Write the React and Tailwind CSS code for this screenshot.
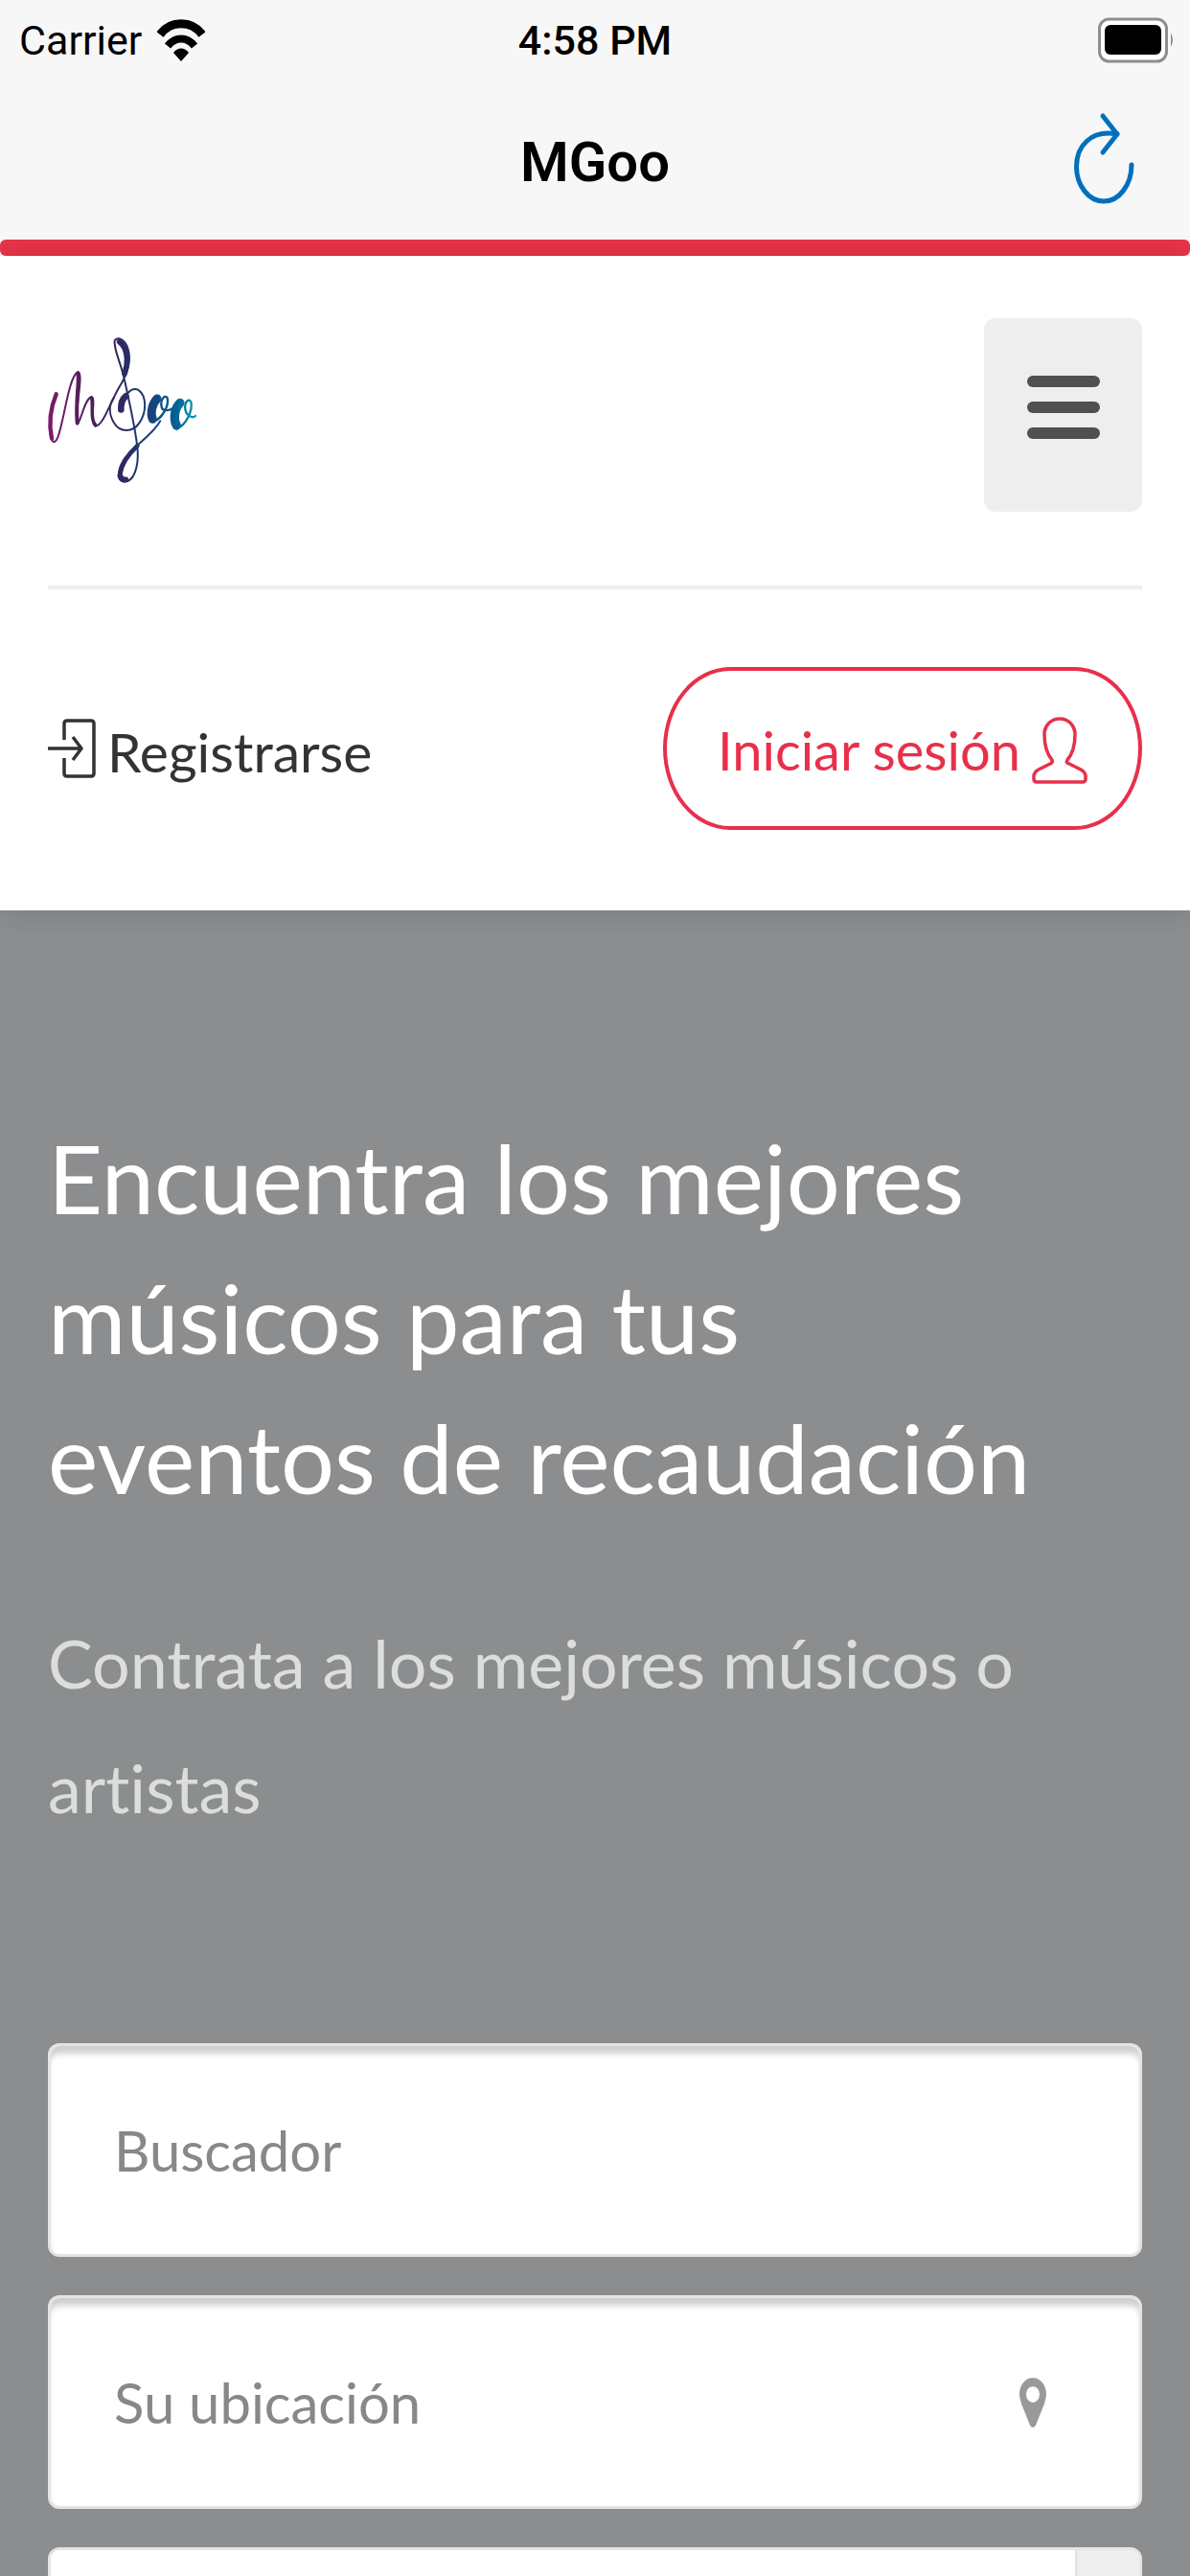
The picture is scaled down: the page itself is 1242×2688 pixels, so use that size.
import React from 'react';

function WifiIcon() {
  return (
    <svg width="50" height="46" viewBox="0 0 50 46" fill="none" stroke="#000" aria-hidden="true">
      <path d="M3 17 C14 2 36 2 47 17" strokeWidth="9" />
      <path d="M11 29 C19 19 31 19 39 29" strokeWidth="8" />
      <path d="M25 45 L17 36 C21 30 29 30 33 36 Z" fill="#000" stroke="none" />
    </svg>
  );
}

function BatteryIcon() {
  return (
    <svg width="80" height="48" viewBox="0 0 80 48" aria-hidden="true">
      <rect x="1.5" y="2" width="70" height="44" rx="10" fill="#fff" stroke="#8e8e8e" strokeWidth="3" />
      <rect x="7" y="8" width="59" height="31" rx="6" fill="#000" />
      <path d="M76 16 Q80 24 76 31 Z" fill="#8e8e8e" />
    </svg>
  );
}

function ReloadIcon() {
  return (
    <svg width="70" height="98" viewBox="0 0 70 98" fill="none" stroke="#0070bd" strokeWidth="5" strokeLinecap="round" strokeLinejoin="round" aria-hidden="true">
      <path d="M63 56 C63 77 50 94 34 94 C18 94 5.500 77 5.500 58 C5.500 37 20 19 48 24" />
      <path d="M33 5 L48 24 L33 43" />
    </svg>
  );
}

function Logo() {
  return (
    <svg width="160" height="157" viewBox="60 60 480 471" fill="none" strokeLinecap="round" strokeLinejoin="round" className="overflow-visible" role="img" aria-label="MGoo">
      <defs>
        <linearGradient id="ink" gradientUnits="userSpaceOnUse" x1="60" y1="0" x2="520" y2="0">
          <stop offset="0" stopColor="#7c1a6c" />
          <stop offset="0.25" stopColor="#4d2058" />
          <stop offset="0.5" stopColor="#2f2862" />
          <stop offset="0.7" stopColor="#18417c" />
          <stop offset="0.88" stopColor="#046396" />
          <stop offset="1" stopColor="#0a9aae" />
        </linearGradient>
      </defs>
      <g stroke="url(#ink)">
        <path d="M87 242 C68 280 62 335 68 372 C72 396 82 402 92 376 C112 320 125 190 154 174 C174 178 142 300 152 338 C164 330 174 258 197 252 C211 258 190 330 208 344 C232 346 258 264 282 224 C306 186 324 140 310 100 C302 74 280 62 269 76 C264 100 290 150 300 200 C318 280 336 360 341 420 C344 470 330 518 300 518 C274 516 278 482 296 452 C318 412 386 376 412 328" strokeWidth="6" />
        <path d="M288 296 C294 250 320 220 342 230 C372 250 368 304 346 334 C326 364 286 366 266 332 C250 304 252 276 266 256" strokeWidth="6" />
        <path d="M86 244 C70 282 62 334 72 382" strokeWidth="13" />
        <path d="M155 180 C158 214 146 270 152 334" strokeWidth="12" />
        <path d="M197 258 C202 280 192 324 209 340" strokeWidth="10" />
        <path d="M284 80 C308 98 314 138 300 180" strokeWidth="17" />
        <path d="M289 292 C288 272 294 258 304 250" strokeWidth="20" />
        <path d="M286 494 C290 466 312 432 340 406" strokeWidth="14" />
        <path d="M286 500 Q292 514 304 511" strokeWidth="17" />
        <path d="M398 258 C376 276 370 318 390 330 C420 320 440 276 434 256 C426 242 408 264 418 290 C434 300 456 290 464 276" strokeWidth="7" />
        <path d="M402 258 C386 274 380 304 388 322" strokeWidth="27" />
        <path d="M470 268 C446 290 446 340 464 352 C494 340 514 294 508 268 C498 252 482 278 494 304 C506 318 516 318 522 312" strokeWidth="7" />
        <path d="M474 271 C456 288 452 322 463 342" strokeWidth="28" />
      </g>
    </svg>
  );
}

function EnterIcon() {
  return (
    <svg width="50" height="62" viewBox="0 0 50 62" fill="none" stroke="#333" strokeWidth="3.500" strokeLinejoin="round" aria-hidden="true">
      <path d="M17 22 V5 Q17 2 20 2 H45 Q48 2 48 5 V57 Q48 60 45 60 H20 Q17 60 17 57 V41" />
      <path d="M0 31 H35 M26 19 L35 31 L26 43" />
    </svg>
  );
}

function UserIcon() {
  return (
    <svg width="58" height="70" viewBox="0 0 58 70" fill="none" stroke="#e8304a" strokeWidth="3.500" strokeLinejoin="round" aria-hidden="true">
      <path d="M29 2 C20 2 13 9 13 18 C13 30 15 38 21 45 Q22 48 19 49 L7 55 Q2 58 2 62 V65 Q2 68 5 68 H53 Q56 68 56 65 V62 Q56 58 51 55 L39 49 Q35 48 37 45 C43 38 45 30 45 18 C45 9 38 2 29 2 Z" />
    </svg>
  );
}

function PinIcon() {
  return (
    <svg width="30" height="54" viewBox="0 0 30 48" preserveAspectRatio="none" aria-hidden="true">
      <path fill="#999" fillRule="evenodd" d="M15 1 C7 1 1 8 1 16 C1 19 2 22 3 25 L12 45 Q15 49 18 45 L27 25 C28 22 29 19 29 16 C29 8 23 1 15 1 Z M15 9 A7 7.500 0 1 1 15 24 A7 7.500 0 1 1 15 9 Z" />
    </svg>
  );
}

const fieldClass =
  'block w-full h-[223px] rounded-xl border-3 border-[#e4e4e4] bg-white px-[66px] text-[58px] text-[#888] placeholder:text-[#888] shadow-[inset_0_10px_6px_-2px_#d0d0d0] outline-none';

function App() {
  return (
    <div className="flex h-screen flex-col overflow-hidden bg-white font-['Lato',sans-serif] [font-variant-ligatures:none]">
      <div className="shrink-0 bg-[#f7f7f7] font-['Roboto',sans-serif] text-black">
        <div className="grid h-20 grid-cols-3 items-center px-4 pt-1 text-[43px]">
          <div className="flex items-center gap-4 pl-1">
            <span>Carrier</span>
            <WifiIcon />
          </div>
          <span className="text-center font-medium">4:58 PM</span>
          <div className="flex justify-end">
            <BatteryIcon />
          </div>
        </div>
        <div className="grid h-[170px] grid-cols-3 items-center px-[54px]">
          <span />
          <span className="pt-2 text-center text-[58px] font-semibold">MGoo</span>
          <button type="button" aria-label="Recargar" className="justify-self-end">
            <ReloadIcon />
          </button>
        </div>
      </div>

      {/* Page load progress */}
      <div className="h-[17px] shrink-0 bg-[#f7f7f7]">
        <div className="h-full rounded-md bg-[#e83548]" />
      </div>

      <header className="relative z-10 shrink-0 bg-white px-[50px] pt-[65px] pb-[84px] shadow-[0_0_24px_rgba(0,0,0,0.15)]">
        <div className="flex items-start justify-between border-b-4 border-[#eee] pb-[77px]">
          <a href="#inicio" className="mt-[18px]">
            <Logo />
          </a>
          <button type="button" aria-label="Menú" className="flex h-[202px] w-[165px] flex-col items-center gap-[15px] rounded-xl bg-[#eee] pt-[60px]">
            <span className="h-3 w-[76px] rounded-full bg-[#505050]" />
            <span className="h-3 w-[76px] rounded-full bg-[#505050]" />
            <span className="h-3 w-[76px] rounded-full bg-[#505050]" />
          </button>
        </div>
        <div className="mt-[81px] flex items-center justify-between">
          <a href="#registro" className="flex items-center gap-3 text-[57px] text-[#333]">
            <EnterIcon />
            <span className="pt-2">Registrarse</span>
          </a>
          <a href="#sesion" className="flex h-[170px] items-center gap-3 rounded-[70px/85px] border-4 border-[#e8304a] px-[53px] pt-1 text-[56px] text-[#e8304a]">
            <span>Iniciar sesión</span>
            <UserIcon />
          </a>
        </div>
      </header>

      <main className="flex-1 bg-[#8b8d8f] px-[50px] pt-[206px]">
        <h1 className="max-w-[1060px] text-[99px] leading-[146px] text-white">
          Encuentra los mejores músicos para tus eventos de recaudación
        </h1>
        <p className="mt-[76px] text-[70px] leading-[130px] text-[#dcdddd]">
          Contrata a los mejores músicos o artistas
        </p>
        <form className="mt-[202px] flex flex-col gap-10">
          <input type="text" aria-label="Buscador" placeholder="Buscador" className={fieldClass} />
          <div className="relative">
            <input type="text" aria-label="Su ubicación" placeholder="Su ubicación" className={fieldClass} />
            <button type="button" aria-label="Usar mi ubicación" className="absolute top-[85px] right-[99px]">
              <PinIcon />
            </button>
          </div>
          <div className="flex h-[223px] overflow-hidden rounded-xl border-3 border-[#e4e4e4] bg-white">
            <select aria-label="Categoría" className="flex-1 appearance-none bg-white px-[66px] text-[58px] text-[#888]" />
            <div className="w-[67px] border-l-2 border-[#e0e0e0] bg-[#eee]" />
          </div>
        </form>
      </main>
    </div>
  );
}

export default App;
